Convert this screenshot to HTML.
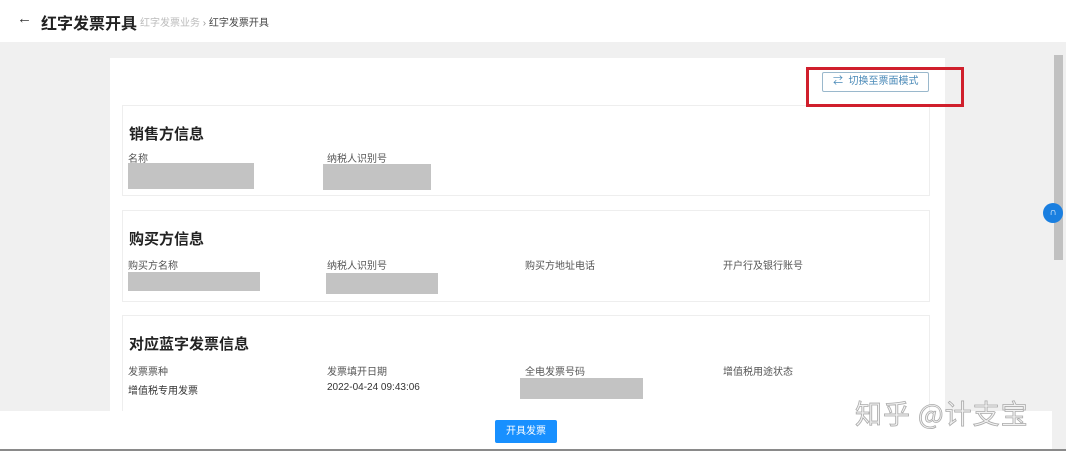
<!DOCTYPE html><html><head><meta charset="utf-8"><style>
*{margin:0;padding:0;box-sizing:border-box}
body{width:1080px;height:456px;overflow:hidden;background:#fff;font-family:"Liberation Sans","Noto Sans CJK SC",sans-serif;position:relative}
.a{position:absolute}
.lbl{font-size:10px;color:#555}
.h{font-size:15px;font-weight:bold;color:#222}
.box{position:absolute;left:122px;width:808px;border:1px solid #eee;background:#fff}
.g{position:absolute;background:#c3c3c3}
</style></head><body>
<div class="a" style="left:0;top:0;width:1066px;height:42px;background:#fff"></div>
<div class="a" style="left:17px;top:10px;font-size:15px;color:#333">←</div>
<div class="a" style="left:41px;top:10px;font-size:16px;font-weight:bold;color:#222">红字发票开具</div>
<div class="a" style="left:140px;top:14px;font-size:10px;color:#bbb">红字发票业务 <span style="color:#999">›</span> <span style="color:#444">红字发票开具</span></div>
<div class="a" style="left:0;top:42px;width:1052px;height:369px;background:#f0f0f0"></div>
<div class="a" style="left:110px;top:58px;width:835px;height:353px;background:#fff"></div>
<div class="a" style="left:822px;top:72px;width:107px;height:20px;border:1px solid #9ab8cc;border-radius:2px;font-size:10px;color:#4a8ab8;line-height:18px;padding-left:10px">⇄&nbsp; 切换至票面模式</div>
<div class="box" style="top:105px;height:91px"></div>
<div class="a" style="left:806px;top:67px;width:158px;height:40px;border:3px solid #d01f2c"></div>
<div class="a h" style="left:129px;top:123px">销售方信息</div>
<div class="a lbl" style="left:128px;top:150px">名称</div>
<div class="a lbl" style="left:327px;top:150px">纳税人识别号</div>
<div class="g" style="left:128px;top:163px;width:126px;height:26px"></div>
<div class="g" style="left:323px;top:164px;width:108px;height:26px"></div>
<div class="box" style="top:210px;height:92px"></div>
<div class="a h" style="left:129px;top:228px">购买方信息</div>
<div class="a lbl" style="left:128px;top:257px">购买方名称</div>
<div class="a lbl" style="left:327px;top:257px">纳税人识别号</div>
<div class="a lbl" style="left:525px;top:257px">购买方地址电话</div>
<div class="a lbl" style="left:723px;top:257px">开户行及银行账号</div>
<div class="g" style="left:128px;top:272px;width:132px;height:19px"></div>
<div class="g" style="left:326px;top:273px;width:112px;height:21px"></div>
<div class="box" style="top:315px;height:96px;border-bottom:none"></div>
<div class="a h" style="left:129px;top:333px">对应蓝字发票信息</div>
<div class="a lbl" style="left:128px;top:363px">发票票种</div>
<div class="a lbl" style="left:327px;top:363px">发票填开日期</div>
<div class="a lbl" style="left:525px;top:363px">全电发票号码</div>
<div class="a lbl" style="left:723px;top:363px">增值税用途状态</div>
<div class="a lbl" style="left:128px;top:382px;color:#333">增值税专用发票</div>
<div class="a lbl" style="left:327px;top:382px;color:#333">2022-04-24 09:43:06</div>
<div class="g" style="left:520px;top:378px;width:123px;height:21px"></div>
<div class="a" style="left:495px;top:420px;width:62px;height:23px;background:#1890ff;border-radius:2px;color:#fff;font-size:10px;text-align:center;line-height:23px">开具发票</div>
<div class="a" style="left:855px;top:393px;font-size:27px;color:#f2f2f2;-webkit-text-stroke:0.8px #aaa;font-family:'Noto Sans CJK SC',sans-serif;letter-spacing:1px">知乎 @计支宝</div>
<div class="a" style="left:0;top:449px;width:1066px;height:2px;background:#8a8a8a"></div>
<div class="a" style="left:1052px;top:42px;width:14px;height:407px;background:#f0f0f0"></div>
<div class="a" style="left:1054px;top:55px;width:9px;height:205px;background:#c1c1c1"></div>
<div class="a" style="left:1043px;top:203px;width:20px;height:20px;border-radius:50%;background:#1a7fe0;color:#fff;font-size:10px;text-align:center;line-height:20px;font-weight:bold">∩</div>
</body></html>
